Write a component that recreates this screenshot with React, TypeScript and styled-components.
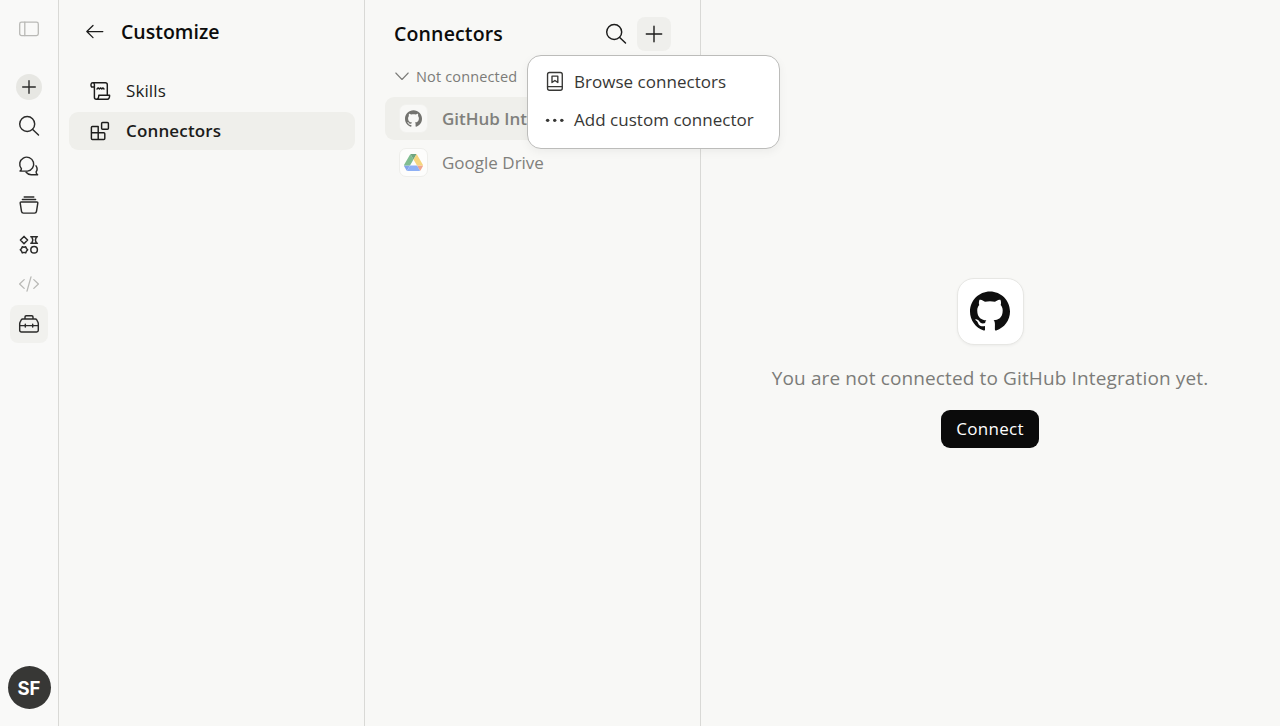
import React from "react";
import styled, { createGlobalStyle } from "styled-components";
import { SiGithub } from "react-icons/si";

const GlobalStyle = createGlobalStyle`
  *, *::before, *::after { box-sizing: border-box; }
  body { margin: 0; background: #f8f8f6; overflow: hidden; }
  button { font: inherit; border: 0; padding: 0; background: none; color: inherit; }
  svg { display: block; flex: none; }
`;

const Shell = styled.div`
  display: flex;
  height: 100vh;
  background: #f8f8f6;
  color: #1c1c1b;
  font-family: "Open Sans", "Noto Sans", sans-serif;
`;

const Rail = styled.nav`
  width: 59px;
  flex: none;
  display: flex;
  flex-direction: column;
  align-items: center;
  padding: 10px 1px 17px 0;
  border-right: 1px solid #d9d9d6;
  background: #f9f9f8;
`;

const RailItem = styled.button<{ $active?: boolean; $muted?: boolean }>`
  display: grid;
  place-items: center;
  width: 38px;
  height: 38px;
  margin-bottom: 1.5px;
  border-radius: 8px;
  color: ${(p) => (p.$muted ? "#b9b9b6" : "#2b2b2a")};
  background: ${(p) => (p.$active ? "#f1f1ee" : "transparent")};
`;

const RailTop = styled.div`
  height: 57.6px;
`;

const RoundPlus = styled.span`
  display: grid;
  place-items: center;
  width: 26px;
  height: 26px;
  border-radius: 50%;
  background: #e7e7e3;
`;

const Avatar = styled.div`
  display: grid;
  place-items: center;
  width: 43px;
  height: 43px;
  margin: auto 0 0 1px;
  border-radius: 50%;
  background: #373735;
  color: #fff;
  font-family: Inter, "Open Sans", sans-serif;
  font-size: 18.5px;
  font-weight: 700;
`;

const Sidebar = styled.aside`
  width: 306px;
  flex: none;
  padding: 12px 9px 0 10px;
  border-right: 1px solid #d9d9d6;
`;

const SidebarHeader = styled.header`
  display: flex;
  align-items: center;
  gap: 16px;
  height: 40px;
  padding-left: 16px;
  margin-bottom: 20px;
`;

const Title = styled.h1<{ $spacing?: number }>`
  margin: 0;
  font-size: 19.5px;
  line-height: 28px;
  font-weight: 650;
  letter-spacing: ${(p) => p.$spacing ?? 0}px;
  color: #0c0c0b;
`;

const NavItem = styled.a<{ $active?: boolean }>`
  display: flex;
  align-items: center;
  gap: 15px;
  height: 38px;
  margin-bottom: 2px;
  padding: 0 0 1px 20px;
  border-radius: 9px;
  font-size: 17px;
  font-weight: ${(p) => (p.$active ? 600 : 400)};
  letter-spacing: ${(p) => (p.$active ? "0.15px" : "0.1px")};
  background: ${(p) => (p.$active ? "#efefeb" : "transparent")};
`;

const ListPane = styled.section`
  width: 336px;
  flex: none;
  padding: 17px 20px 0;
  border-right: 1px solid #d9d9d6;
`;

const ListHeader = styled.header`
  display: flex;
  align-items: center;
  height: 34px;
  padding: 0 9px;
`;

const Actions = styled.div`
  display: flex;
  margin-left: auto;
  gap: 4px;
`;

const MenuAnchor = styled.div`
  position: relative;
`;

const IconButton = styled.button<{ $active?: boolean }>`
  display: grid;
  place-items: center;
  width: 34px;
  height: 34px;
  border-radius: 8px;
  color: #1c1c1b;
  background: ${(p) => (p.$active ? "#efefec" : "transparent")};
`;

const GroupLabel = styled.div`
  display: flex;
  align-items: center;
  gap: 7px;
  height: 22px;
  margin: 14px 0 10px;
  padding-left: 10px;
  font-size: 14.5px;
  letter-spacing: 0.15px;
  color: #7c7c79;
`;

const ConnectorRow = styled.div<{ $active?: boolean }>`
  display: flex;
  align-items: center;
  gap: 14px;
  height: 43px;
  margin-bottom: 1px;
  padding-left: 14px;
  border-radius: 9px;
  font-size: 17px;
  font-weight: ${(p) => (p.$active ? 600 : 400)};
  color: #80807c;
  white-space: nowrap;
  background: ${(p) => (p.$active ? "#efefeb" : "transparent")};
`;

const Tile = styled.span<{ $active?: boolean }>`
  display: grid;
  place-items: center;
  width: 29px;
  height: 29px;
  border: 1px solid ${(p) => (p.$active ? "#f1f1ee" : "#eeeeeb")};
  border-radius: 7px;
  background: ${(p) => (p.$active ? "#f8f8f6" : "#fdfdfc")};
  color: #73736f;
`;

const Menu = styled.div`
  position: absolute;
  z-index: 2;
  top: 38px;
  right: -109px;
  width: 253px;
  height: 94px;
  padding: 7px 8px;
  border: 1px solid #bcbcba;
  border-radius: 14px;
  background: #fff;
  box-shadow: 0 3px 10px rgba(0, 0, 0, 0.05);
`;

const MenuItem = styled.div`
  display: flex;
  align-items: center;
  gap: 9px;
  height: 38px;
  padding: 0 0 2px 9px;
  font-size: 17px;
  letter-spacing: 0.03px;
  color: #373735;
  white-space: nowrap;
`;

const Detail = styled.main`
  flex: 1;
  display: flex;
  flex-direction: column;
  align-items: center;
  justify-content: center;
  padding: 0 1px 1px 0;
`;

const AppTile = styled.div`
  display: grid;
  place-items: center;
  width: 67px;
  height: 67px;
  border: 1px solid #e7e7e4;
  border-radius: 17px;
  background: #fff;
  color: #0f0f0f;
  box-shadow: 0 1px 3px rgba(0, 0, 0, 0.05);
`;

const Message = styled.p`
  margin: 19px 0 17px;
  font-size: 19px;
  line-height: 29px;
  letter-spacing: 0.13px;
  color: #7c7c79;
  white-space: nowrap;
`;

const ConnectButton = styled.button`
  width: 98px;
  height: 38px;
  border-radius: 9px;
  background: #0b0b0b;
  && {
    color: #fff;
    font-size: 17px;
    font-weight: 500;
    letter-spacing: 0.3px;
  }
`;

type IconProps = { size?: number; stroke?: number; children: React.ReactNode };

function Icon({ size = 22, stroke = 1.45, children }: IconProps) {
  return (
    <svg
      width={size}
      height={size}
      viewBox="0 0 22 22"
      fill="none"
      stroke="currentColor"
      strokeWidth={stroke}
      strokeLinecap="round"
      strokeLinejoin="round"
    >
      {children}
    </svg>
  );
}

const SearchIcon = () => (
  <Icon>
    <circle cx="9.2" cy="9" r="7.5" />
    <path d="m14.7 14.5 5.8 5.6" />
  </Icon>
);

const PlusIcon = ({ length = 7 }: { length?: number }) => (
  <Icon stroke={1.4}>
    <path d={`M11 ${11 - length}v${length * 2}M${11 - length} 11h${length * 2}`} />
  </Icon>
);

const DriveLogo = () => (
  <svg width="19" height="17" viewBox="0 0 87.3 78">
    <path fill="#84a5ea" d="m6.6 66.85 3.85 6.65c.8 1.4 1.95 2.5 3.3 3.3l13.75-23.8h-27.5c0 1.55.4 3.1 1.2 4.5z" />
    <path fill="#80bd91" d="m43.65 25-13.75-23.8c-1.35.8-2.5 1.9-3.3 3.3l-25.4 44a9.06 9.06 0 0 0-1.2 4.5h27.5z" />
    <path fill="#f0a58f" d="m73.55 76.8c1.35-.8 2.5-1.9 3.3-3.3l1.6-2.75 7.65-13.25c.8-1.4 1.2-2.95 1.2-4.5h-27.5l5.85 11.5z" />
    <path fill="#6fa580" d="m43.65 25 13.75-23.8c-1.35-.8-2.9-1.2-4.5-1.2h-18.5c-1.6 0-3.15.45-4.5 1.2z" />
    <path fill="#8eb0f5" d="m59.8 53h-32.3l-13.75 23.8c1.35.8 2.9 1.2 4.5 1.2h50.8c1.6 0 3.15-.45 4.5-1.2z" />
    <path fill="#f6d57e" d="m73.4 26.5-12.7-22c-.8-1.4-1.95-2.5-3.3-3.3l-13.75 23.8 16.15 28h27.45c0-1.55-.4-3.1-1.2-4.5z" />
  </svg>
);

export default function App() {
  return (
    <Shell>
      <GlobalStyle />
      <Rail>
        <RailTop>
          <RailItem $muted aria-label="Toggle sidebar">
            <Icon stroke={1.3}>
              <rect x="1.7" y="4.2" width="18.6" height="13.4" rx="1.8" />
              <path d="M6.8 4.2v13.4" />
            </Icon>
          </RailItem>
        </RailTop>
        <RailItem aria-label="New">
          <RoundPlus><PlusIcon length={6.3} /></RoundPlus>
        </RailItem>
        <RailItem aria-label="Search"><SearchIcon /></RailItem>
        <RailItem aria-label="Chats">
          <Icon>
            <path d="M2 16.1c1-.7 1.4-1.4 1.4-2.4A7 7 0 1 1 9.500 16.100Z" />
            <path d="M18 10.800c1.400 2 1.300 4.400.1 6.100 0 1.200.5 1.900 1.500 2.800h-6.400c-2.300 0-4-1-5.100-2.400" />
          </Icon>
        </RailItem>
        <RailItem aria-label="Projects">
          <Icon>
            <path d="M6.2 3h9.6M4.4 5.4h13.2M3.2 7.9h15.6c.7 0 1.1.5 1 1.2l-1.3 8.3a2 2 0 0 1-2 1.7h-11a2 2 0 0 1-2-1.7L2.2 9.1c-.1-.7.3-1.2 1-1.2Z" />
          </Icon>
        </RailItem>
        <RailItem aria-label="Artifacts">
          <Icon stroke={1.5}>
            <path d="m6 2.4 3.6 3.7L6 9.8 2.4 6.1Z" />
            <path d="M12.8 2.7h6.6M12.8 9.3h6.6M13.9 2.7c0 1.5.9 2.2.9 3.3s-.9 1.8-.9 3.3M18.3 2.7c0 1.5-.9 2.2-.9 3.3s.9 1.8.9 3.3" />
            <path d="m4.3 12.7 1.7.6 1.7-.6.7 1.7 1.3 1.4-1.3 1.4-.7 1.7-1.7-.5-1.7.5-.7-1.7-1.3-1.4 1.3-1.4Z" />
            <circle cx="16.1" cy="15.8" r="3.3" />
          </Icon>
        </RailItem>
        <RailItem $muted aria-label="Code">
          <Icon stroke={1.3}>
            <path d="m6.2 6.6-4.6 4.4 4.6 4.4M15.8 6.6l4.6 4.4-4.6 4.4M13 3.8 9 18.2" />
          </Icon>
        </RailItem>
        <RailItem $active aria-label="Customize">
          <Icon>
            <path d="M7 6V3.9c0-.8.5-1.2 1.2-1.2h5.6c.7 0 1.2.4 1.2 1.2V6M4.6 6h12.8c.7 0 1 .3 1.3.8l1.2 2.4c.3.5.4.9.4 1.5v6.6c0 1-.7 1.7-1.7 1.7H3.4c-1 0-1.7-.7-1.7-1.7v-6.6c0-.6.1-1 .4-1.5l1.2-2.4c.3-.5.6-.8 1.3-.8Z" />
            <path d="M1.8 12.6h18.4M7.3 11.2V14M14.7 11.2V14" />
          </Icon>
        </RailItem>
        <Avatar>SF</Avatar>
      </Rail>

      <Sidebar>
        <SidebarHeader>
          <Icon size={20} stroke={1.4}>
            <path d="M19.6 10.5H2M8.8 3.800 2 10.500l6.800 6.700" />
          </Icon>
          <Title>Customize</Title>
        </SidebarHeader>
        <NavItem>
          <Icon>
            <path d="M4.8 7H2.6c-1-1.2-1-4.2 1.2-4.2h12.5c1.2 0 2 .8 2 2v9.4M3.8 2.8c1 0 1.6.7 1.6 1.8v12.6c0 1.1.8 2 1.9 2h11.1c1.4 0 2.3-1.7 2.2-4H9.8c0 2.3-.7 4-2.5 4" />
            <path d="m8 9 1.2-1.1L10.4 9l1.2-1.1L12.8 9 14 7.9l1 1.1" />
          </Icon>
          Skills
        </NavItem>
        <NavItem $active>
          <Icon>
            <path d="M3.4 6.4h5.8v13H3.4a1 1 0 0 1-1-1v-11a1 1 0 0 1 1-1ZM2.4 12.8h12.4a1 1 0 0 1 1 1v4.6a1 1 0 0 1-1 1H9.2v-6.6" />
            <rect x="12.6" y="2.4" width="6.8" height="6.8" rx="1" />
          </Icon>
          Connectors
        </NavItem>
      </Sidebar>

      <ListPane>
        <ListHeader>
          <Title $spacing={0.15}>Connectors</Title>
          <Actions>
            <IconButton aria-label="Search connectors"><SearchIcon /></IconButton>
            <MenuAnchor>
              <IconButton $active aria-label="Add connector"><PlusIcon length={7.7} /></IconButton>
              <Menu>
                <MenuItem>
                  <Icon size={20} stroke={1.5}>
                    <rect x="2.8" y="1.7" width="16.2" height="19.5" rx="2.2" />
                    <path d="M2.8 17.2H19M7.7 5.7h6.4v7l-3.2-2.3-3.2 2.3Z" />
                  </Icon>
                  Browse connectors
                </MenuItem>
                <MenuItem>
                  <Icon size={20}>
                    <g fill="currentColor" stroke="none">
                      <circle cx="2.9" cy="12.5" r="1.9" />
                      <circle cx="10.7" cy="12.5" r="1.9" />
                      <circle cx="18.5" cy="12.5" r="1.9" />
                    </g>
                  </Icon>
                  Add custom connector
                </MenuItem>
              </Menu>
            </MenuAnchor>
          </Actions>
        </ListHeader>
        <GroupLabel>
          <svg width="14" height="9" viewBox="0 0 14 9" fill="none" stroke="currentColor" strokeWidth="1.1" strokeLinecap="round" strokeLinejoin="round">
            <path d="M.8 1 7 7.5 13.2 1" />
          </svg>
          Not connected
        </GroupLabel>
        <ConnectorRow $active>
          <Tile $active><SiGithub size={17} /></Tile>
          GitHub Integration
        </ConnectorRow>
        <ConnectorRow>
          <Tile><DriveLogo /></Tile>
          Google Drive
        </ConnectorRow>
      </ListPane>

      <Detail>
        <AppTile><SiGithub size={40} /></AppTile>
        <Message>You are not connected to GitHub Integration yet.</Message>
        <ConnectButton>Connect</ConnectButton>
      </Detail>
    </Shell>
  );
}
